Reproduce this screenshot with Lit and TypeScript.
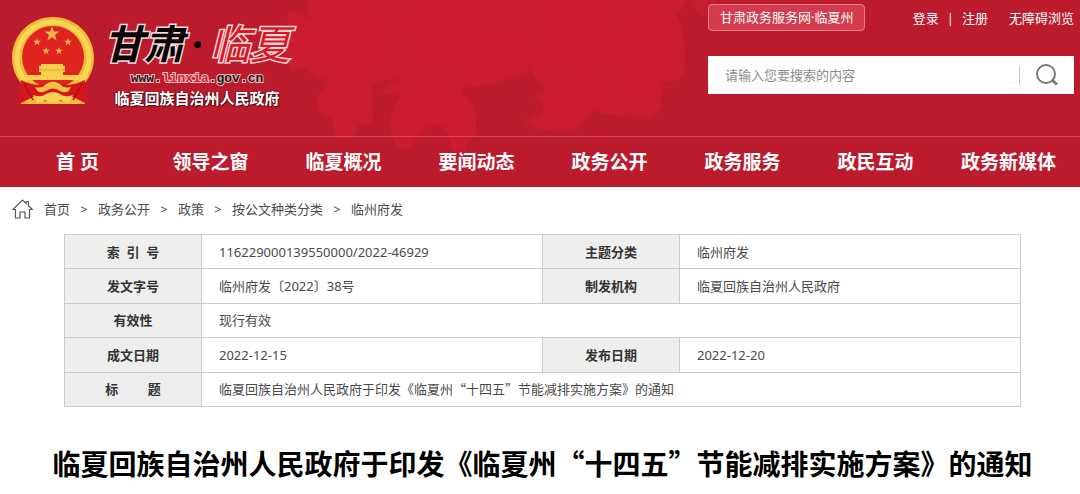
import { LitElement, html, css, svg, nothing } from "lit";
import { customElement } from "lit/decorators.js";

const NAV = ["首 页", "领导之窗", "临夏概况", "要闻动态", "政务公开", "政务服务", "政民互动", "政务新媒体"];
const CRUMBS = ["首页", "政务公开", "政策", "按公文种类分类", "临州府发"];

const star = (cx: number, cy: number, r: number) => {
  const pts: string[] = [];
  for (let i = 0; i < 10; i++) {
    const a = -Math.PI / 2 + (i * Math.PI) / 5;
    const q = i % 2 ? r * 0.4 : r;
    pts.push(`${(cx + q * Math.cos(a)).toFixed(2)},${(cy + q * Math.sin(a)).toFixed(2)}`);
  }
  return svg`<polygon points=${pts.join(" ")} fill="#eeb64a"/>`;
};

@customElement("site-emblem")
class SiteEmblem extends LitElement {
  static styles = css`
    :host { display: block; }
    svg { display: block; width: 84px; height: 90px; }
  `;
  render() {
    return html`
      <svg viewBox="0 0 84 90" role="img" aria-label="国徽">
        <path d="M42 1C65 1 83 19 83 42C83 52 79 61 74 67L74 88L10 88L10 67C5 61 1 52 1 42C1 19 19 1 42 1Z" fill="#eebb3a"/>
        <path d="M15 66A36 36 0 1 1 69 66" fill="none" stroke="#f8d552" stroke-width="5"/>
        <circle cx="42" cy="41" r="31" fill="#df2420"/>
        ${star(41, 18, 8)}${star(26, 26, 4)}${star(57, 26, 4)}${star(35, 35, 4)}${star(48, 35, 4)}
        <path d="M30 48h22v2h2v6h-2v3h19l-4 5H17l-4-5h17v-3h-2v-6h2z" fill="#f9d04c"/>
        <path d="M29 54h25" stroke="#e5a032" stroke-width="1"/>
        <path d="M10 64Q24 71 34 68Q42 62 50 68Q60 71 74 64L76 88L60 80L50 85L34 85L24 80L8 88Z" fill="#d4161c"/>
        <path d="M24 71q7 2 11-3q7-5 14 0q4 5 11 3q-3 8-11 4q-7-5-14 0q-8 4-11-4z" fill="#f2c243"/>
        <path d="M22 79q8 3 13-1q7-4 14 0q5 4 13 1l-5 8-7-3q-8 5-16 0l-7 3z" fill="#f8d153"/>
        <path d="M13 68l9 16M71 68l-9 16" stroke="#ab101a" stroke-width="1.5"/>
      </svg>`;
  }
}

@customElement("site-header")
class SiteHeader extends LitElement {
  static styles = css`
    :host { display: block; color: #fff; background: #bc1b2d; }
    * { box-sizing: border-box; }
    a { color: inherit; text-decoration: none; }
    .frame { display: grid; grid-template-columns: minmax(0, 1fr); grid-template-rows: auto auto; }
    .flowers { grid-area: 1 / 1 / 3 / 2; width: 100%; height: 100%; min-height: 0; contain: size; }
    .top { grid-area: 1 / 1; display: flex; justify-content: space-between; min-height: 136px; padding: 4px 6px 0 11px; }
    .brand { display: flex; gap: 9px; padding-top: 12px; }
    .names { display: flex; flex-direction: column; align-items: center; }
    .script { display: flex; align-items: center; font-size: 40px; line-height: 56px; font-weight: 700; font-style: italic; color: #0c0505; paint-order: stroke; -webkit-text-stroke: 3px #f3dcdc; }
    .dot { width: 26px; text-align: center; -webkit-text-stroke: 0; }
    .red { color: #e01522; font-weight: 400; }
    .url { font: 700 13px/14px "Liberation Mono", monospace; color: #2e0a0e; paint-order: stroke; -webkit-text-stroke: 2px #e9c3c6; }
    .url b { color: #d5202c; }
    .gov { margin-top: 2px; font-size: 15px; line-height: 20px; font-weight: 700; text-shadow: 1px 1px 1px #4d0a12, -1px 0 1px #4d0a12; }
    .tools { display: flex; flex-direction: column; gap: 25px; width: 366px; }
    .links { display: flex; align-items: center; justify-content: space-between; font-size: 13px; line-height: 20px; }
    .service { padding: 3px 11px; border: 1px solid #e8808b; border-radius: 4px; background: #d43c4e; line-height: 19px; }
    .account { display: flex; align-items: center; }
    .sep { margin: 0 8px; }
    .barrier { margin-left: 21px; }
    .search { display: flex; align-items: center; height: 38px; background: #fff; }
    .field { flex: 1; min-width: 0; height: 100%; padding: 0 17px; border: 0; outline: 0; background: none; font: inherit; font-size: 13px; color: #555; }
    .field::placeholder { color: #8b8b8b; opacity: 1; }
    .go { display: flex; align-items: center; justify-content: center; width: 55px; height: 19px; padding: 0; border: 0; border-left: 1px solid #c4c4c4; background: none; }
    .go svg { width: 24px; height: 24px; }
    .nav { grid-area: 2 / 1; display: grid; grid-template-columns: repeat(8, minmax(0, 1fr)); padding: 0 5px 0 11px; border-top: 1px solid #d64455; font-size: 19px; line-height: 50px; font-weight: 700; text-align: center; white-space: nowrap; }
  `;
  render() {
    return html`
      <header class="frame">
        <svg class="flowers" viewBox="0 0 1080 187" preserveAspectRatio="xMidYMin slice" aria-hidden="true">
          <defs>
            <filter id="soft" x="-5%" y="-5%" width="110%" height="110%"><feGaussianBlur stdDeviation="1.5"/></filter>
            <filter id="wide" x="-20%" y="-20%" width="140%" height="140%"><feGaussianBlur stdDeviation="5"/></filter>
          </defs>
          <g fill="#cb1b30" filter="url(#soft)">
            <path d="M310 -5L690 -5Q682 10 676 14Q688 40 684 75Q672 84 664 80Q662 112 652 118Q638 120 628 114Q612 118 594 110Q584 118 577 128Q570 134 562 128Q545 132 536 128L524 122Q536 116 544 112Q546 104 533 96Q546 96 546 90Q542 82 536 79L530 70Q520 78 505 80Q492 86 472 86Q462 88 460 92Q474 100 476 120L476 134Q466 142 464 152L452 150Q450 132 440 126Q424 124 418 136L410 150L398 148Q386 128 394 106L402 96L381 92Q390 82 402 80Q382 78 372 84Q370 92 374 118Q374 128 360 122L354 134Q344 142 334 134L332 118Q314 114 318 96L330 82Q312 76 306 68L290 70Q280 40 290 12Q304 12 310 20Q306 8 310 -5Z"/>
            <path d="M690 -5h26q2 22-10 22q-12-2-16-22z" opacity=".6"/>
          </g>
          <g fill="#d21c33" filter="url(#wide)" opacity=".6">
            <ellipse cx="350" cy="38" rx="26" ry="24"/>
            <ellipse cx="445" cy="30" rx="24" ry="22"/>
            <ellipse cx="500" cy="55" rx="26" ry="16"/>
            <ellipse cx="580" cy="30" rx="22" ry="30"/>
            <ellipse cx="650" cy="50" rx="22" ry="30"/>
            <ellipse cx="440" cy="105" rx="24" ry="14"/>
            <ellipse cx="575" cy="102" rx="20" ry="12"/>
          </g>
        </svg>
        <div class="top">
          <a class="brand" href="#">
            <site-emblem></site-emblem>
            <span class="names">
              <span class="script">甘肃<span class="dot">·</span><span class="red">临夏</span></span>
              <span class="url">www.<b>linxia</b>.gov.cn</span>
              <span class="gov">临夏回族自治州人民政府</span>
            </span>
          </a>
          <div class="tools">
            <div class="links">
              <a class="service" href="#">甘肃政务服务网·临夏州</a>
              <span class="account"><a href="#">登录</a><span class="sep">|</span><a href="#">注册</a><a class="barrier" href="#">无障碍浏览</a></span>
            </div>
            <form class="search" role="search">
              <input class="field" type="text" aria-label="搜索" placeholder="请输入您要搜索的内容">
              <button class="go" type="button" aria-label="搜索">
                <svg viewBox="0 0 24 24" fill="none" stroke="#777" stroke-width="2"><circle cx="11" cy="11" r="9"/><path d="M17.500 17.500l4.500 4" stroke-width="3"/></svg>
              </button>
            </form>
          </div>
        </div>
        <nav class="nav">${NAV.map((n) => html`<a href="#">${n}</a>`)}</nav>
      </header>`;
  }
}

@customElement("app-root")
class AppRoot extends LitElement {
  static styles = css`
    :host { display: block; background: #fff; color: #4a4a4a; font-family: "Noto Sans", "Noto Sans CJK SC", sans-serif; font-size: 13px; }
    * { box-sizing: border-box; }
    a { color: inherit; text-decoration: none; }
    .crumbs { display: flex; align-items: center; height: 47px; padding: 0 12px 4px; }
    .home { width: 21px; height: 20px; margin-right: 11px; }
    .gt { width: 28px; text-align: center; }
    .meta { padding: 0 59px 0 64px; }
    .table { width: 100%; height: 173px; border-collapse: collapse; table-layout: fixed; line-height: 20px; }
    .label-col { width: 137px; }
    .table th, .table td { padding: 0; border: 1px solid #ccc; }
    .table th { background: #eee; color: #333; font-weight: 700; text-align: center; white-space: pre; }
    .table td { padding-left: 17px; text-align: left; }
    .table .cjk, .title { font-family: "Noto Sans CJK SC", sans-serif; }
    .title { margin: 36px 0 0; padding-left: 5px; color: #000; font-size: 28px; line-height: 40px; font-weight: 700; text-align: center; }
  `;
  private row(a: string, b: string, c?: string, d?: string, cjk = false) {
    return html`<tr>
      <th scope="row">${a}</th>
      <td class=${cjk ? "cjk" : nothing} colspan=${c ? 1 : 3}>${b}</td>
      ${c ? html`<th scope="row">${c}</th><td>${d}</td>` : nothing}
    </tr>`;
  }
  render() {
    return html`
      <site-header></site-header>
      <main>
        <nav class="crumbs" aria-label="当前位置">
          <svg class="home" viewBox="0 0 21 20" fill="none" stroke="#555" stroke-width="1.200" aria-hidden="true"><path d="M3.500 10.500H.8L10.500 1l3.500 3.400V2.500h2.500v4.300l3.800 3.700h-2.800V19h-4.500v-6H8v6H3.500z"/></svg>
          ${CRUMBS.map((c, i) => html`${i ? html`<span class="gt">&gt;</span>` : nothing}<a href="#">${c}</a>`)}
        </nav>
        <section class="meta">
          <table class="table">
            <colgroup><col class="label-col"><col><col class="label-col"><col></colgroup>
            <tbody>
              ${this.row("索  引  号", "116229000139550000/2022-46929", "主题分类", "临州府发")}
              ${this.row("发文字号", "临州府发〔2022〕38号", "制发机构", "临夏回族自治州人民政府")}
              ${this.row("有效性", "现行有效")}
              ${this.row("成文日期", "2022-12-15", "发布日期", "2022-12-20")}
              ${this.row("标　　 题", "临夏回族自治州人民政府于印发《临夏州“十四五”节能减排实施方案》的通知", undefined, undefined, true)}
            </tbody>
          </table>
        </section>
        <h1 class="title">临夏回族自治州人民政府于印发《临夏州“十四五”节能减排实施方案》的通知</h1>
      </main>`;
  }
}
